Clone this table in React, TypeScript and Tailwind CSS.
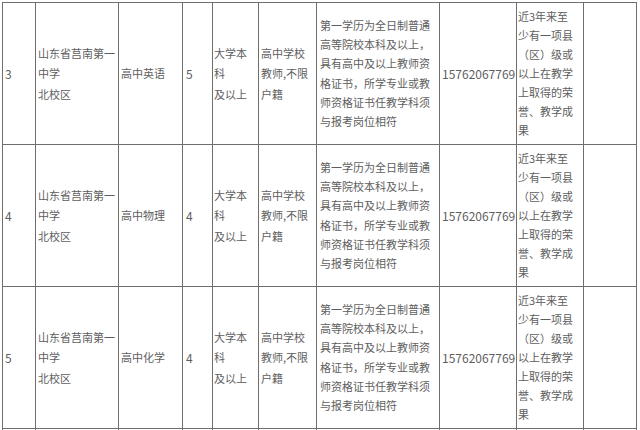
import React from 'react'

// Column widths between the grid lines
const COLS = 'grid-cols-[32px_82px_63px_29px_45px_57px_122px_76px_66px_52px]'

type Row = {
  no: string
  school: string[]
  subject: string
  count: string
  degree: string[]
  scope: string[]
  require: string[]
  phone: string
  bonus: string[]
}

const requireLines = [
  '第一学历为全日制普通',
  '高等院校本科及以上，',
  '具有高中及以上教师资',
  '格证书，所学专业或教',
  '师资格证书任教学科须',
  '与报考岗位相符',
]

const bonusLines = ['近3年来至', '少有一项县', '（区）级或', '以上在教学', '上取得的荣', '誉、教学成', '果']

const rows: Row[] = [
  { no: '3', subject: '高中英语', count: '5' },
  { no: '4', subject: '高中物理', count: '4' },
  { no: '5', subject: '高中化学', count: '4' },
].map((r) => ({
  ...r,
  school: ['山东省莒南第一', '中学', '北校区'],
  degree: ['大学本', '科', '及以上'],
  scope: ['高中学校', '教师,不限', '户籍'],
  require: requireLines,
  phone: '15762067769',
  bonus: bonusLines,
}))

function Cell({ lines, className = '' }: { lines: string[]; className?: string }) {
  return (
    <div className={`flex h-[141px] flex-col justify-center bg-white pl-[2px] ${className}`}>
      {lines.map((l, i) => (
        <span key={i} className="whitespace-nowrap">
          {l}
        </span>
      ))}
    </div>
  )
}

export default function App() {
  return (
    <div
      className="h-[430px] w-[640px] overflow-hidden bg-white text-[11px] text-[#5e5e5e]"
      style={{ fontFamily: '"Noto Sans CJK SC", "Noto Sans", sans-serif' }}
    >
      <div className="ml-[2px] mt-[2px] w-[635px] bg-[#6e6e6e] p-px">
        <div className={`grid ${COLS} gap-px`}>
          {rows.map((r) => (
            <React.Fragment key={r.no}>
              <Cell lines={[r.no]} className="text-[12px]" />
              <Cell lines={r.school} className="leading-[20.5px]" />
              <Cell lines={[r.subject]} />
              <Cell lines={[r.count]} className="pl-[3px] text-[12px]" />
              <Cell lines={r.degree} className="pl-px leading-[20.5px]" />
              <Cell lines={r.scope} className="leading-[20.5px]" />
              <Cell lines={r.require} className="pl-[3px] leading-[19.3px]" />
              <Cell lines={[r.phone]} className="text-[12px]" />
              <Cell lines={r.bonus} className="pl-px leading-[19px]" />
              <Cell lines={[]} />
            </React.Fragment>
          ))}
          {Array.from({ length: 10 }).map((_, i) => (
            <Cell key={i} lines={[]} />
          ))}
        </div>
      </div>
    </div>
  )
}
